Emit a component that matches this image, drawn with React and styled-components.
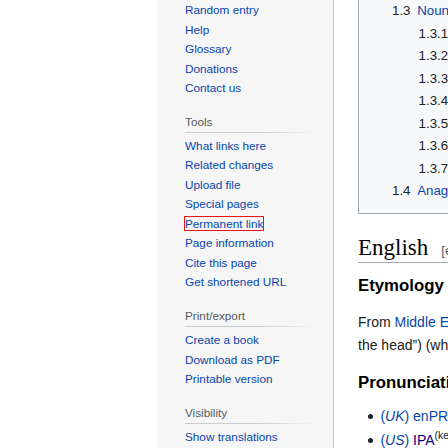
import React from "react";
import styled, { createGlobalStyle } from "styled-components";

const Global = createGlobalStyle`
  html, body { margin: 0; padding: 0; height: 100%; overflow: hidden; background: #fff; }
  #root { height: 100%; }
`;

const Page = styled.div`
  display: flex;
  height: 100%;
  width: 100%;
  overflow: hidden;
  background: #fff;
  font-family: "Liberation Sans", Arial, sans-serif;
`;

const Gutter = styled.div`
  flex: 0 0 157px;
  background: #fff;
`;

const Sidebar = styled.nav`
  flex: 0 0 177px;
  box-sizing: border-box;
  background: #f6f6f6;
  border-right: 1px solid #a7d7f9;
  padding-left: 28px;
  overflow: hidden;
`;

const PortalHeading = styled.h3`
  margin: 17.2px 16px 3.3px 0;
  padding: 0 0 4px 0;
  font-size: 11.75px;
  line-height: 14px;
  font-weight: normal;
  color: #54595d;
  background: linear-gradient(to right, #c8ccd1 0%, #c8ccd1 55%, rgba(200, 204, 209, 0) 100%) left bottom / 100% 1px no-repeat;
`;

const PortalList = styled.ul`
  margin: 0;
  padding: 0;
  list-style: none;
`;

const PortalItem = styled.li`
  font-size: 11.75px;
  line-height: 13.5px;
  padding: 3px 0;
  white-space: nowrap;
`;

const NavLink = styled.a`
  color: #0645ad;
  text-decoration: none;
  outline: ${(p) => (p.$marked ? "1px solid #e8141b" : "none")};
`;

const Content = styled.main`
  flex: 1;
  min-width: 0;
  overflow: hidden;
  padding-left: 24px;
  color: #202122;
  font-size: 14px;
`;

const Column = styled.div`
  width: 640px;
`;

const Toc = styled.div`
  margin-top: -1px;
  border: 1px solid #a2a9b1;
  background: #f8f9fa;
  padding: 0 0 10px 0;
  font-size: 13.3px;
  line-height: 22.5px;
`;

const TocList = styled.ul`
  margin: 0;
  padding: 0 0 0 ${(p) => (p.$nested ? "26.6px" : "33px")};
  list-style: none;
`;

const TocItem = styled.li`
  white-space: nowrap;
`;

const TocNumber = styled.span`
  color: #202122;
  padding-right: 0.5em;
`;

const TocText = styled.a`
  color: #0645ad;
  text-decoration: none;
`;

const LangHeading = styled.h2`
  margin: 19px 0 0;
  padding: 0;
  font-family: "Liberation Serif", "Times New Roman", serif;
  font-weight: normal;
  font-size: 23px;
  line-height: 1.3;
  color: #000;
  border-bottom: 1px solid #a2a9b1;
  white-space: nowrap;
`;

const EditSection = styled.span`
  font-family: "Liberation Sans", Arial, sans-serif;
  font-size: 13px;
  color: #54595d;
  margin-left: 13px;
`;

const SectionHeading = styled.h3`
  margin: 9.5px 0 0;
  padding: 0;
  font-size: 16.8px;
  line-height: 1.6;
  font-weight: bold;
  color: #000;
  white-space: nowrap;
`;

const Para = styled.p`
  margin: 11.3px 0 13.4px;
  line-height: 23px;
  white-space: nowrap;
`;

const WikiLink = styled.a`
  color: ${(p) => (p.$visited ? "#0b0080" : "#0645ad")};
  text-decoration: none;
  font-style: ${(p) => (p.$italic ? "italic" : "normal")};
`;

const Qualifier = styled.span`
  color: #0645ad;
`;

const PronList = styled.ul`
  margin: 7.4px 0 0 22.4px;
  padding: 0;
  list-style: none;
`;

const PronItem = styled.li`
  line-height: 22.4px;
  margin-bottom: 1.4px;
  white-space: nowrap;
  &::before {
    content: "";
    display: inline-block;
    width: 5px;
    height: 5px;
    border-radius: 50%;
    background: #202122;
    margin-left: -12.5px;
    margin-right: 7.5px;
    vertical-align: 2px;
  }
`;

const Sup = styled.sup`
  font-size: 75%;
  line-height: 0;
`;

const portals = [
  { items: ["Random entry", "Help", "Glossary", "Donations", "Contact us"] },
  {
    title: "Tools",
    items: [
      "What links here",
      "Related changes",
      "Upload file",
      "Special pages",
      "Permanent link",
      "Page information",
      "Cite this page",
      "Get shortened URL",
    ],
  },
  { title: "Print/export", items: ["Create a book", "Download as PDF", "Printable version"] },
  { title: "Visibility", items: ["Show translations"] },
];

const tocSub = [
  ["1.3.1", "Synonyms"],
  ["1.3.2", "Derived terms"],
  ["1.3.3", "Related terms"],
  ["1.3.4", "Descendants"],
  ["1.3.5", "Translations"],
  ["1.3.6", "See also"],
  ["1.3.7", "References"],
];

export default function App() {
  return (
    <>
      <Global />
      <Page>
        <Gutter />
        <Sidebar>
          {portals.map((p, i) => (
            <div key={i}>
              {p.title && <PortalHeading>{p.title}</PortalHeading>}
              <PortalList>
                {p.items.map((it) => (
                  <PortalItem key={it}>
                    <NavLink href="#" $marked={it === "Permanent link"}>
                      {it}
                    </NavLink>
                  </PortalItem>
                ))}
              </PortalList>
            </div>
          ))}
        </Sidebar>
        <Content>
          <Column>
            <Toc>
              <TocList>
                <TocItem>
                  <TocNumber>1.3</TocNumber>
                  <TocText href="#">Noun</TocText>
                  <TocList $nested>
                    {tocSub.map(([n, t]) => (
                      <TocItem key={n}>
                        <TocNumber>{n}</TocNumber>
                        <TocText href="#">{t}</TocText>
                      </TocItem>
                    ))}
                  </TocList>
                </TocItem>
                <TocItem>
                  <TocNumber>1.4</TocNumber>
                  <TocText href="#">Anagrams</TocText>
                </TocItem>
              </TocList>
            </Toc>
            <LangHeading>
              English<EditSection>[edit]</EditSection>
            </LangHeading>
            <SectionHeading>Etymology</SectionHeading>
            <Para>
              From <WikiLink href="#">Middle English</WikiLink> <i>hed</i>, <i>heed</i>, <i>heved</i>, from{" "}
              <WikiLink href="#">Old English</WikiLink> <i>hēafod</i> (“top of
              <br />
              the head”) (which is from Proto-Germanic <i>*haubudą</i>)
            </Para>
            <SectionHeading>Pronunciation</SectionHeading>
            <PronList>
              <PronItem>
                <Qualifier>
                  (<WikiLink href="#" $italic>UK</WikiLink>)
                </Qualifier>{" "}
                <WikiLink href="#">enPR</WikiLink>: hĕd, <WikiLink href="#" $visited>IPA</WikiLink>
                <Sup>(key)</Sup>: /hɛd/
              </PronItem>
              <PronItem>
                <Qualifier>
                  (<WikiLink href="#" $italic>US</WikiLink>)
                </Qualifier>{" "}
                <WikiLink href="#" $visited>IPA</WikiLink>
                <Sup>(key)</Sup>: /hɛd/
              </PronItem>
            </PronList>
          </Column>
        </Content>
      </Page>
    </>
  );
}
